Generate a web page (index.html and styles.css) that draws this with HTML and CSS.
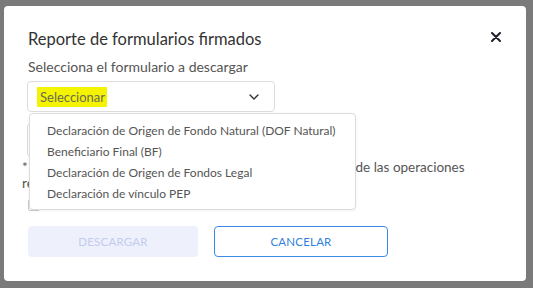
FILE: index.html
```html
<!DOCTYPE html>
<html lang="es">
<head>
    <meta charset="UTF-8">
    <title>Reporte de formularios firmados</title>
    <link rel="stylesheet" href="styles.css">
</head>
<body>
    <div class="modal">
        <div class="modal-header">
            <h2 class="modal-title">Reporte de formularios firmados</h2>
            <button class="close-btn" aria-label="Cerrar">
                <svg width="10" height="10" viewBox="0 0 10 10">
                    <path d="M1 1 L9 9 M9 1 L1 9" stroke="#1f1f2b" stroke-width="2" stroke-linecap="round"/>
                </svg>
            </button>
        </div>

        <label class="field-label">Selecciona el formulario a descargar</label>
        <div class="select-wrap">
            <div class="select-box">
                <span class="placeholder">Seleccionar</span>
                <svg class="chevron" width="10" height="6" viewBox="0 0 10 6">
                    <path d="M1 1 L5 5 L9 1" fill="none" stroke="#333" stroke-width="1.4" stroke-linecap="round" stroke-linejoin="round"/>
                </svg>
            </div>

            <!-- dropdown abierto -->
            <ul class="dropdown">
                <li>Declaración de Origen de Fondo Natural (DOF Natural)</li>
                <li>Beneficiario Final (BF)</li>
                <li>Declaración de Origen de Fondos Legal</li>
                <li>Declaración de vínculo PEP</li>
            </ul>
        </div>

        <div class="date-box"></div>

        <p class="note">* Solo se incluirán en el reporte los formularios firmados de las operaciones realizadas.</p>

        <div class="check-row">
            <span class="checkbox"></span>
        </div>

        <div class="actions">
            <button class="btn btn-primary" disabled>DESCARGAR</button>
            <button class="btn btn-outline">CANCELAR</button>
        </div>
    </div>
</body>
</html>
```

FILE: styles.css
```css
body {
    margin: 0;
    background: #7a7a7a;
    font-family: Lato, 'Liberation Sans', sans-serif;
    overflow: hidden;
}

.modal {
    position: relative;
    width: 522px;
    height: 275px;
    margin: 6px 0 0 4px;
    padding: 21px 24px 0 24px;
    box-sizing: border-box;
    background: #fff;
    border-radius: 4px;
}

.modal-header {
    display: flex;
    justify-content: space-between;
    align-items: flex-start;
}

.modal-title {
    margin: 0;
    font-size: 16.5px;
    line-height: 24px;
    font-weight: 400;
    color: #333;
}

.close-btn {
    border: none;
    background: none;
    padding: 0;
    margin: 3px 1px 0 0;
    cursor: pointer;
}

.field-label {
    display: block;
    margin-top: 6px;
    font-size: 14px;
    line-height: 20px;
    color: #555;
}

.select-wrap {
    position: relative;
    margin-top: 4px;
}

.select-box {
    width: 248px;
    height: 31px;
    box-sizing: border-box;
    border: 1px solid #dcdcdc;
    border-radius: 4px;
    display: flex;
    align-items: center;
    justify-content: space-between;
    padding: 0 15px 0 9px;
    margin-left: -1px;
}

.placeholder {
    background: #f4f400;
    color: #6a6a5a;
    font-size: 13px;
    line-height: 19px;
    padding: 1px 4px 0 3px;
    width: 63px;
}

.dropdown {
    position: absolute;
    top: 32px;
    left: 1px;
    width: 327px;
    height: 97px;
    box-sizing: border-box;
    margin: 0;
    padding: 6px 0 0 17px;
    list-style: none;
    background: #fff;
    border: 1px solid #dcdcdc;
    border-radius: 4px;
    box-shadow: 0 1px 3px rgba(0, 0, 0, 0.06);
    z-index: 2;
}

.dropdown li {
    font-size: 12px;
    line-height: 21px;
    color: #555;
    white-space: nowrap;
}

.date-box {
    width: 120px;
    height: 34px;
    box-sizing: border-box;
    margin-top: 11px;
    margin-left: -1px;
    border: 1px solid #dcdcdc;
    border-radius: 4px;
}

.note {
    margin: 2px 0 0 -6px;
    width: 460px;
    font-size: 13.5px;
    line-height: 16px;
    color: #555;
}

.check-row {
    margin-top: 8px;
}

.checkbox {
    display: block;
    width: 12px;
    height: 12px;
    box-sizing: border-box;
    border: 1px solid #ccc;
    border-radius: 2px;
}

.actions {
    display: flex;
    gap: 16px;
    margin-top: 15px;
}

.btn {
    height: 31px;
    border-radius: 4px;
    font-family: inherit;
    font-size: 11.5px;
    letter-spacing: 0.2px;
    cursor: pointer;
}

.btn-primary {
    width: 170px;
    border: none;
    background: #eef1fc;
    color: #c3cbef;
}

.btn-outline {
    width: 174px;
    background: #fff;
    border: 1px solid #3b8be6;
    color: #2f7fe0;
}
```
